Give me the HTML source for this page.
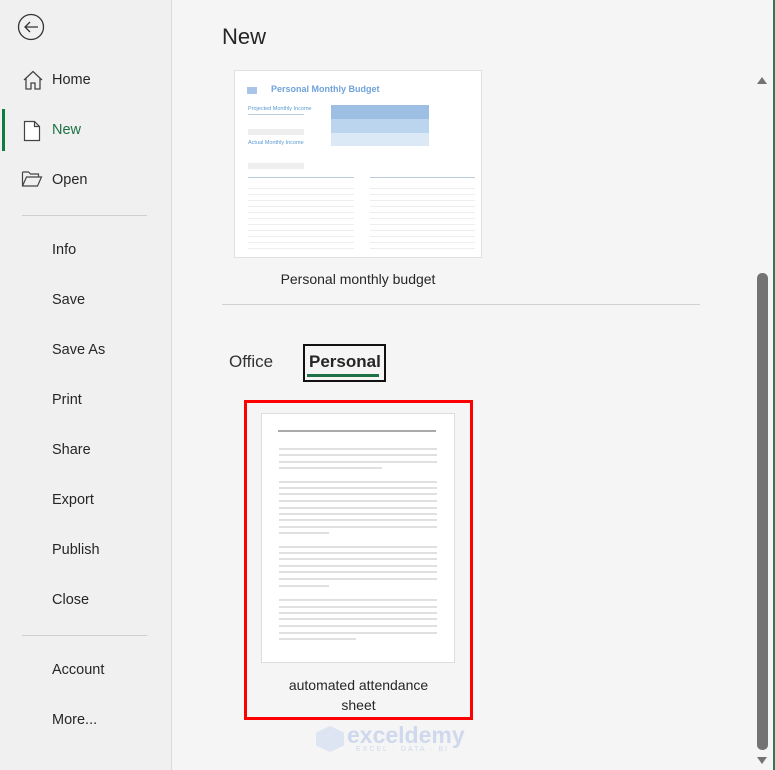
<!DOCTYPE html>
<html><head><style>
*{margin:0;padding:0;box-sizing:border-box}
body{width:775px;height:770px;overflow:hidden;background:#f5f5f5;font-family:"Liberation Sans",sans-serif;position:relative;color:#262626}
.side{position:absolute;left:0;top:0;width:172px;height:770px;background:#f0f0f0;border-right:1px solid #dadada}
.it{position:absolute;left:52px;font-size:14.5px;color:#262626}
.sep{position:absolute;left:22px;width:125px;height:1px;background:#d0d0d0}
.ln{position:absolute;height:2px;background:#e0e0e0}
</style></head><body>
<div class="side">
<svg style="position:absolute;left:17px;top:13px" width="28" height="28" viewBox="0 0 28 28"><circle cx="14" cy="14" r="12.5" fill="none" stroke="#333" stroke-width="1.3"/><path d="M21 14H8M13 9l-5 5 5 5" fill="none" stroke="#333" stroke-width="1.3"/></svg>
<svg style="position:absolute;left:22px;top:70px" width="22" height="20" viewBox="0 0 22 20"><path d="M2 10L11 1.5 20 10M4 8.5V19h5v-6h4v6h5V8.5" fill="none" stroke="#444" stroke-width="1.3"/></svg>
<div class="it" style="top:72px">Home</div>
<div style="position:absolute;left:2px;top:109px;width:3px;height:42px;background:#107c41"></div>
<svg style="position:absolute;left:23px;top:120px" width="18" height="22" viewBox="0 0 18 22"><path d="M1.5 1.5h10l5 5v14h-15z M11.5 1.5v5h5" fill="#fff" stroke="#444" stroke-width="1.2"/></svg>
<div class="it" style="top:122px;color:#1e7145">New</div>
<svg style="position:absolute;left:21px;top:170px" width="22" height="18" viewBox="0 0 22 18"><path d="M1.5 2h6l2 2h8v3M1.5 2v14h15l4-9H5.5l-4 9" fill="none" stroke="#444" stroke-width="1.2"/></svg>
<div class="it" style="top:172px">Open</div>
<div class="sep" style="top:215px"></div>
<div class="it" style="top:242px">Info</div>
<div class="it" style="top:292px">Save</div>
<div class="it" style="top:342px">Save As</div>
<div class="it" style="top:392px">Print</div>
<div class="it" style="top:442px">Share</div>
<div class="it" style="top:492px">Export</div>
<div class="it" style="top:542px">Publish</div>
<div class="it" style="top:592px">Close</div>
<div class="sep" style="top:635px"></div>
<div class="it" style="top:662px">Account</div>
<div class="it" style="top:712px">More...</div>
</div>
<div style="position:absolute;left:222px;top:24px;font-size:22px;color:#262626">New</div>
<div style="position:absolute;left:234px;top:70px;width:248px;height:188px;background:#fff;border:1px solid #e0e0e0">
<div style="position:absolute;left:12px;top:16px;width:10px;height:7px;background:#a9c4e6"></div>
<div style="position:absolute;left:36px;top:13px;font-size:9px;font-weight:bold;color:#6fa3dc">Personal Monthly Budget</div>
<div style="position:absolute;left:13px;top:35px;font-size:5.5px;color:#5b9bd5">Projected Monthly Income</div>
<div style="position:absolute;left:13px;top:43px;width:56px;height:1px;background:#bcd"></div>
<div style="position:absolute;left:13px;top:58px;width:56px;height:6px;background:#eee"></div>
<div style="position:absolute;left:13px;top:69px;font-size:5.5px;color:#5b9bd5">Actual Monthly Income</div>
<div style="position:absolute;left:13px;top:92px;width:56px;height:6px;background:#eee"></div>
<div style="position:absolute;left:96px;top:34px;width:98px;height:14px;background:#9dbfe3"></div>
<div style="position:absolute;left:96px;top:48px;width:98px;height:14px;background:#bcd5ee"></div>
<div style="position:absolute;left:96px;top:62px;width:98px;height:13px;background:#dbe8f6"></div>
<div style="position:absolute;left:13px;top:106px;width:106px;height:1px;background:#bcd"></div>
<div style="position:absolute;left:135px;top:106px;width:105px;height:1px;background:#bcd"></div>
<div style="position:absolute;left:13px;top:112px;width:106px;height:70px;background:repeating-linear-gradient(#fff 0 5px,#eee 5px 6px)"></div>
<div style="position:absolute;left:135px;top:112px;width:105px;height:70px;background:repeating-linear-gradient(#fff 0 5px,#eee 5px 6px)"></div>
</div>
<div style="position:absolute;left:234px;top:271px;width:248px;text-align:center;font-size:14px">Personal monthly budget</div>
<div style="position:absolute;left:222px;top:304px;width:478px;height:1px;background:#d2d2d2"></div>
<div style="position:absolute;left:229px;top:352px;font-size:17px;color:#333">Office</div>
<div style="position:absolute;left:303px;top:344px;width:83px;height:38px;border:2px solid #111"></div>
<div style="position:absolute;left:309px;top:352px;font-size:17px;font-weight:bold;color:#262626">Personal</div>
<div style="position:absolute;left:307px;top:374px;width:72px;height:3px;background:#1e7145"></div>
<div style="position:absolute;left:244px;top:400px;width:229px;height:320px;border:3px solid #f00"></div>
<div style="position:absolute;left:261px;top:413px;width:194px;height:250px;background:#fff;border:1px solid #ddd"></div>
<div class="ln" style="left:278px;top:430px;width:158px;background:#aaa"></div>
<div id="lines"></div>
<div style="position:absolute;left:250px;top:675px;width:217px;text-align:center;font-size:14px;line-height:20px;color:#262626">automated attendance<br>sheet</div>
<div style="position:absolute;left:316px;top:726px;width:28px;height:26px;background:#dde4f2;clip-path:polygon(50% 0,100% 25%,100% 75%,50% 100%,0 75%,0 25%)"></div>
<div style="position:absolute;left:347px;top:722px;font-size:23px;font-weight:bold;color:#cfd8ec">exceldemy</div>
<div style="position:absolute;left:356px;top:746px;font-size:7px;letter-spacing:2px;color:#cfd8ec">EXCEL · DATA · BI</div>
<svg style="position:absolute;left:756px;top:75px" width="12" height="10"><path d="M1 9L6 2 11 9z" fill="#737373"/></svg>
<div style="position:absolute;left:757px;top:273px;width:11px;height:477px;background:#737373;border-radius:5px"></div>
<svg style="position:absolute;left:756px;top:756px" width="12" height="10"><path d="M1 1L6 8 11 1z" fill="#737373"/></svg>
<div style="position:absolute;left:773px;top:0;width:2px;height:770px;background:#2f7a53"></div>
<script>
var ys=[[448,0],[454,0],[461,0],[467,1],[481,0],[487,0],[493,0],[500,0],[507,0],[513,0],[519,0],[526,0],[532,2],[546,0],[552,0],[558,0],[565,0],[571,0],[578,0],[585,2],[599,0],[606,0],[612,0],[618,0],[625,0],[632,0],[638,3]];
var w=[158,103,50,77],h='';
ys.forEach(function(a){h+='<div class="ln" style="left:279px;top:'+a[0]+'px;width:'+w[a[1]]+'px"></div>'});
document.getElementById('lines').innerHTML=h;
</script>
</body></html>
